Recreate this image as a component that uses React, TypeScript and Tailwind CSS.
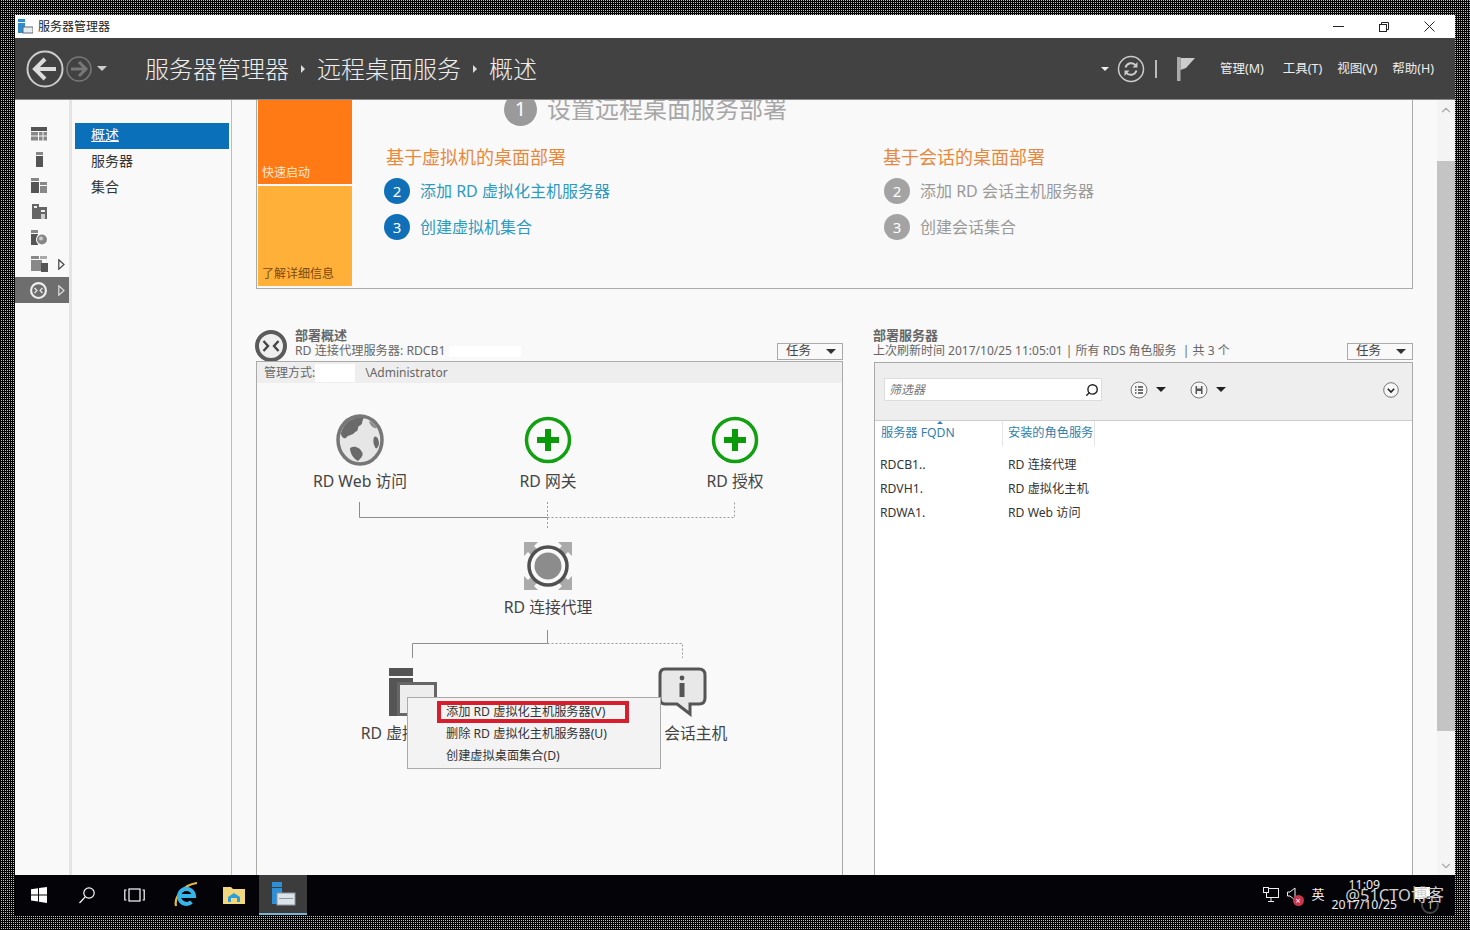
import React from 'react';
import { ChevronUp, ChevronDown, Search } from 'lucide-react';

const FONT = "font-['Noto_Sans','Noto_Sans_CJK_SC',sans-serif]";

const Triangle = ({ className }: { className: string }) => (
  <span className={`inline-block w-0 h-0 border-x-[5px] border-x-transparent border-t-[5px] ${className}`} />
);

const RailArrow = ({ color }: { color: string }) => (
  <svg className="absolute right-[4px]" width="7" height="11" viewBox="0 0 7 11" fill="none" stroke={color} strokeWidth="1.2">
    <path d="M0.8 0.8 L6 5.5 L0.8 10.2Z" />
  </svg>
);

// left rail glyphs, all drawn in the same 20x20 box
const RailIcon = ({ kind }: { kind: number }) => {
  const dark = '#555';
  const mid = '#888';
  return (
    <svg width="20" height="20" viewBox="0 0 20 20">
      {kind === 0 && (
        <>
          <rect x="2" y="3" width="16" height="4" fill={dark} />
          <rect x="2" y="8" width="7" height="3.5" fill={mid} />
          <rect x="10" y="8" width="3.5" height="3.5" fill={mid} />
          <rect x="14.5" y="8" width="3.5" height="3.5" fill={mid} />
          <rect x="2" y="12.5" width="7" height="4" fill={mid} />
          <rect x="10" y="12.5" width="3.5" height="4" fill={mid} />
          <rect x="14.5" y="12.5" width="3.5" height="4" fill={mid} />
        </>
      )}
      {kind === 1 && (
        <>
          <rect x="7" y="2" width="7" height="3" fill={mid} />
          <rect x="7" y="6" width="7" height="11" fill={dark} />
        </>
      )}
      {kind === 2 && (
        <>
          <rect x="2" y="2" width="8" height="3" fill={mid} />
          <rect x="2" y="6" width="8" height="11" fill={dark} />
          <rect x="11" y="6" width="7" height="3" fill={mid} />
          <rect x="11" y="10" width="7" height="7" fill={mid} />
        </>
      )}
      {kind === 3 && (
        <>
          <rect x="3" y="2" width="7" height="15" fill="#666" />
          <rect x="10" y="5" width="8" height="12" fill="#666" />
          <rect x="5" y="4" width="3" height="2" fill="#eee" />
          <rect x="12" y="8" width="4" height="2" fill="#eee" />
          <rect x="12" y="12" width="4" height="5" fill="#ccc" />
        </>
      )}
      {kind === 4 && (
        <>
          <rect x="2" y="2" width="7" height="3" fill={mid} />
          <rect x="2" y="6" width="7" height="11" fill={dark} />
          <circle cx="13" cy="11.5" r="6" fill="#fff" />
          <circle cx="13" cy="11.5" r="5" fill={mid} />
          <circle cx="12" cy="10.5" r="2" fill="#ccc" />
        </>
      )}
      {kind === 5 && (
        <>
          <rect x="2" y="2" width="8" height="3" fill={mid} />
          <rect x="2" y="6" width="11" height="11" fill={mid} />
          <rect x="11" y="2" width="7" height="3" fill="#aaa" />
          <rect x="12" y="9" width="7" height="9" fill={dark} />
        </>
      )}
    </svg>
  );
};

const RemoteGlyph = ({ size, ring, inner, mark }: { size: number; ring: string; inner: string; mark: string }) => (
  <svg width={size} height={size} viewBox="0 0 32 32">
    <circle cx="16" cy="16" r="14" fill={inner} stroke={ring} strokeWidth="4" />
    <path d="M8.5 11 L13 16 L8.5 21 M23.5 11 L19 16 L23.5 21" fill="none" stroke={mark} strokeWidth="2.4" />
  </svg>
);

const Globe = () => (
  <svg width="50" height="54" viewBox="0 0 50 54">
    <ellipse cx="25" cy="27" rx="22" ry="24" fill="#e6e6e6" stroke="#777" strokeWidth="3.5" />
    <path d="M6 20 C9 9 20 3 29 5 C26 8 29 11 24 13 C22 15 24 18 20 19 C18 23 13 21 11 25 C8 26 6 23 6 20Z" fill="#6a6a6a" />
    <path d="M15 35 C20 32 25 35 27 39 C29 42 26 45 23 48 C19 46 15 41 15 35Z" fill="#6a6a6a" />
    <path d="M39 24 C41 22 44 25 44 31 C43 35 41 37 40 34 C38 31 38 27 39 24Z" fill="#6a6a6a" />
    <path d="M34 8 C37 9 40 12 42 15 C38 16 35 12 34 8Z" fill="#8c8c8c" />
  </svg>
);

const GreenPlus = () => (
  <svg width="48" height="48" viewBox="0 0 48 48">
    <circle cx="24" cy="24" r="21.5" fill="#f9f9f9" stroke="#12a012" strokeWidth="3.5" />
    <path d="M21 13 H27 V21 H35 V27 H27 V35 H21 V27 H13 V21 H21Z" fill="#0a9a0a" />
  </svg>
);

const Broker = () => (
  <svg width="50" height="50" viewBox="0 0 50 50">
    <g fill="#aaa">
      <path d="M1 1 H15 L11 5 L17 11 L11 17 L5 11 L1 15Z" />
      <path d="M49 1 H35 L39 5 L33 11 L39 17 L45 11 L49 15Z" />
      <path d="M1 49 H15 L11 45 L17 39 L11 33 L5 39 L1 35Z" />
      <path d="M49 49 H35 L39 45 L33 39 L39 33 L45 39 L49 35Z" />
    </g>
    <circle cx="25" cy="25" r="19" fill="#f9f9f9" stroke="#505050" strokeWidth="3.5" />
    <circle cx="25" cy="25" r="13.5" fill="#8c8c8c" />
  </svg>
);

const VirtualHost = () => (
  <svg width="50" height="50" viewBox="0 0 50 50">
    <rect x="1" y="1" width="24" height="8" fill="#555" />
    <rect x="1" y="11" width="24" height="38" fill="#555" />
    <rect x="9" y="15" width="40" height="34" fill="#666" />
    <rect x="12" y="18" width="34" height="28" fill="#ededed" />
  </svg>
);

const SessionHost = () => (
  <svg width="50" height="50" viewBox="0 0 50 50">
    <path d="M7 2 H41 Q47 2 47 8 V31 Q47 37 41 37 H32 L32 47 L19 37 H7 Q2 37 2 31 V8 Q2 2 7 2Z" fill="#e8e8e8" stroke="#555" strokeWidth="3" />
    <circle cx="24" cy="11" r="2.4" fill="#555" />
    <rect x="21.5" y="16" width="5" height="14" fill="#555" />
  </svg>
);

const DiagramNode = ({ label, className, children }: { label: string; className: string; children: React.ReactNode }) => (
  <div className={`absolute flex flex-col items-center w-[140px] ${className}`}>
    <div className="h-[50px] flex items-center justify-center">{children}</div>
    <span className="mt-[5px] text-[15.8px] text-[#444] whitespace-nowrap">{label}</span>
  </div>
);

const StepRow = ({ n, label, active }: { n: number; label: string; active: boolean }) => (
  <div className="h-[36px] flex items-center gap-[10px]">
    <span className={`w-[26px] h-[26px] rounded-full flex items-center justify-center text-white text-[15px] ${active ? 'bg-[#0f70b7]' : 'bg-[#a3a3a3]'}`}>{n}</span>
    <span className={`text-[16px] ${active ? 'text-[#2f9ac0]' : 'text-[#9a9a9a]'}`}>{label}</span>
  </div>
);

const TasksButton = () => (
  <div className="w-[66px] h-[17px] border border-[#aaa] flex items-center justify-between pl-[8px] pr-[6px] text-[12.5px] text-[#444] bg-[#f9f9f9]">
    <span>任务</span>
    <Triangle className="border-t-[#333]" />
  </div>
);

const RAIL = [0, 1, 2, 3, 4, 5];
const SERVERS = [
  { name: 'RDCB1..', role: 'RD 连接代理' },
  { name: 'RDVH1.', role: 'RD 虚拟化主机' },
  { name: 'RDWA1.', role: 'RD Web 访问' },
];

const App: React.FC = () => {
  return (
    <div className={`w-[1470px] h-[930px] overflow-hidden p-[15px] bg-[repeating-conic-gradient(#9cc8d0_0_25%,#050505_0_100%)] bg-[length:2px_2px] ${FONT}`}>
      <div className="w-[1440px] h-[900px] flex flex-col overflow-hidden bg-[#f9f9f9]">

        {/* Title bar */}
        <div className="h-[23px] shrink-0 bg-white flex items-center">
          <svg className="ml-[3px]" width="15" height="15" viewBox="0 0 15 15">
            <rect x="0" y="0" width="7" height="3" fill="#2c8fd0" />
            <rect x="0" y="4" width="7" height="10" fill="#2c8fd0" />
            <rect x="5" y="8" width="10" height="6" fill="#e6eef3" stroke="#667" strokeWidth="1" />
          </svg>
          <span className="ml-[5px] text-[12px] text-[#222]">服务器管理器</span>
          <div className="ml-auto mr-[20px] flex items-center gap-[35px] text-[#222]">
            <span className="w-[11px] h-[1px] bg-[#222]" />
            <svg width="10" height="10" viewBox="0 0 10 10">
              <rect x="0.5" y="2.5" width="7" height="7" fill="none" stroke="#222" />
              <path d="M2.5 2.5 V0.5 H9.5 V7.5 H7.5" fill="none" stroke="#222" />
            </svg>
            <svg width="11" height="11" viewBox="0 0 11 11">
              <path d="M0.5 0.5 L10.5 10.5 M10.5 0.5 L0.5 10.5" stroke="#222" />
            </svg>
          </div>
        </div>

        {/* Header */}
        <div className="h-[62px] shrink-0 bg-[#424242] flex items-center border-b border-[#888]">
          <svg className="ml-[11px]" width="38" height="38" viewBox="0 0 38 38">
            <circle cx="19" cy="19" r="17.5" fill="none" stroke="#ccc" strokeWidth="2" />
            <path d="M19 9 L9 19 L19 29 M9.5 19 H30" fill="none" stroke="#ddd" strokeWidth="4" />
          </svg>
          <svg className="ml-[2px]" width="26" height="26" viewBox="0 0 26 26">
            <circle cx="13" cy="13" r="12" fill="none" stroke="#777" strokeWidth="1.6" />
            <path d="M13 6 L20 13 L13 20 M19 13 H5" fill="none" stroke="#777" strokeWidth="3" />
          </svg>
          <Triangle className="ml-[5px] border-t-[#ccc]" />
          <div className="ml-[38px] flex items-center text-[24px] text-[#eee] font-light whitespace-nowrap">
            <span>服务器管理器</span>
            <span className="mx-[12px] w-0 h-0 border-y-[4px] border-y-transparent border-l-[4px] border-l-[#ddd]" />
            <span>远程桌面服务</span>
            <span className="mx-[12px] w-0 h-0 border-y-[4px] border-y-transparent border-l-[4px] border-l-[#ddd]" />
            <span>概述</span>
          </div>
          <div className="ml-auto flex items-center text-[12.5px] text-[#eee] whitespace-nowrap">
            <span className="w-0 h-0 border-x-[4px] border-x-transparent border-t-[4px] border-t-[#eee]" />
            <svg className="ml-[8px]" width="28" height="28" viewBox="0 0 28 28">
              <circle cx="14" cy="14" r="12.5" fill="none" stroke="#ccc" strokeWidth="1.5" />
              <path d="M8.5 12.5 A6 6 0 0 1 19 10.5 M19.5 15.5 A6 6 0 0 1 9 17.5" fill="none" stroke="#ccc" strokeWidth="2" />
              <path d="M20.5 7 V12.5 H15.5Z M7.5 21 V15.5 H12.5Z" fill="#ccc" />
            </svg>
            <span className="ml-[10px] w-[2px] h-[18px] bg-[#bbb]" />
            <svg className="ml-[20px]" width="18" height="24" viewBox="0 0 18 24">
              <rect x="0" y="0" width="3.5" height="24" fill="#aaa" />
              <path d="M3.5 1 H18 L9 11 L3.5 13Z" fill="#ccc" />
            </svg>
            <span className="ml-[25px] pt-[2px]">管理(M)</span>
            <span className="ml-[19px] pt-[2px]">工具(T)</span>
            <span className="ml-[15px] pt-[2px]">视图(V)</span>
            <span className="ml-[15px] mr-[21px] pt-[2px]">帮助(H)</span>
          </div>
        </div>

        {/* Body */}
        <div className="flex-1 min-h-0 flex overflow-hidden">
          {/* Icon rail */}
          <div className="w-[54px] shrink-0 pt-[21px] flex flex-col">
            {RAIL.map(k => (
              <div key={k} className="h-[26px] flex items-center pl-[14px] relative">
                <RailIcon kind={k} />
                {k === 5 && <RailArrow color="#444" />}
              </div>
            ))}
            <div className="h-[26px] flex items-center pl-[15px] bg-[#6e6e6e] relative">
              <RemoteGlyph size={17} ring="#eee" inner="#6e6e6e" mark="#eee" />
              <RailArrow color="#ddd" />
            </div>
          </div>
          <div className="w-[3px] shrink-0 bg-[#e4e4e4]" />

          {/* Nav column */}
          <div className="w-[160px] shrink-0 pt-[23px] px-[3px] border-r border-[#bdbdbd] text-[14px] leading-[20px] text-[#333]">
            <div className="h-[26px] w-[154px] bg-[#0a70ba] text-white flex items-center pl-[16px] pb-[2px]"><span className="underline">概述</span></div>
            <div className="h-[26px] flex items-center pl-[16px] pb-[3px]">服务器</div>
            <div className="h-[26px] flex items-center pl-[16px] pb-[3px]">集合</div>
          </div>

          {/* Main scrolling area */}
          <div className="flex-1 min-w-0 px-[24px] overflow-hidden">
            {/* Quick start panel, scrolled so that its top is cut off */}
            <div className="h-[189px] w-[1157px] border-x border-b border-[#aaa] flex">
              <div className="ml-[1px] w-[94px] mb-[2px] flex flex-col gap-[2px] text-[12px] text-[#ffe9d0]">
                <div className="h-[84px] bg-[#ff7a14] flex items-end pl-[4px] pb-[2px]">快速启动</div>
                <div className="flex-1 bg-[#ffb038] flex items-end pl-[4px] pb-[3px] text-[#7a4a10]">了解详细信息</div>
              </div>
              <div className="flex-1 relative overflow-hidden">
                <div className="absolute left-[152px] top-[-9px] flex items-center gap-[10px] text-[#a6a6a6] text-[24px] whitespace-nowrap">
                  <span className="w-[33px] h-[33px] rounded-full bg-[#9a9a9a] text-white text-[20px] flex items-center justify-center">1</span>
                  <span>设置远程桌面服务部署</span>
                </div>
                <div className="pt-[44px] pl-[32px] grid grid-cols-[497px_1fr]">
                  <div>
                    <div className="pl-[2px] text-[18px] leading-[26px] text-[#e8883c] mb-[3px]">基于虚拟机的桌面部署</div>
                    <StepRow n={2} label="添加 RD 虚拟化主机服务器" active />
                    <StepRow n={3} label="创建虚拟机集合" active />
                  </div>
                  <div>
                    <div className="pl-[2px] text-[18px] leading-[26px] text-[#e8883c] mb-[3px]">基于会话的桌面部署</div>
                    <div className="pl-[3px]">
                      <StepRow n={2} label="添加 RD 会话主机服务器" active={false} />
                      <StepRow n={3} label="创建会话集合" active={false} />
                    </div>
                  </div>
                </div>
              </div>
            </div>

            <div className="mt-[37px] flex items-start w-[1157px]">
              {/* Deployment overview */}
              <div className="w-[587px] shrink-0">
                <div className="h-[36px] flex items-end relative">
                  <div className="-ml-[1px]"><RemoteGlyph size={32} ring="#5a5a5a" inner="#eeeeee" mark="#444" /></div>
                  <div className="ml-[8px] leading-[16px] pb-[3px]">
                    <div className="text-[13px] font-semibold text-[#666]">部署概述</div>
                    <div className="text-[12.2px] text-[#666] flex items-center">RD 连接代理服务器: RDCB1<span className="ml-[4px] w-[72px] h-[11px] bg-white" /></div>
                  </div>
                  <div className="ml-auto mb-[2px]"><TasksButton /></div>
                </div>
                <div className="relative h-[560px] border border-[#aaa] mt-[-1px]">
                  <div className="h-[21px] bg-[#eeeeee] flex items-center pl-[7px] text-[12px] text-[#666]">
                    管理方式:<span className="w-[40px] h-[18px] bg-white" /><span className="ml-[10px]">\Administrator</span>
                  </div>

                  <svg className="absolute left-0 top-0" width="585" height="330" fill="none">
                    <path d="M102.5 140 V155.5 H290.5" stroke="#8c8c8c" />
                    <path d="M290.5 140 V168 M290.5 155.5 H477.5 V140" stroke="#999" strokeDasharray="2 2" />
                    <path d="M290.5 268 V281.5 H155.5 V296" stroke="#8c8c8c" />
                    <path d="M290.5 281.5 H425.5 V296" stroke="#999" strokeDasharray="2 2" />
                  </svg>

                  <DiagramNode label="RD Web 访问" className="left-[33px] top-[53px]"><Globe /></DiagramNode>
                  <DiagramNode label="RD 网关" className="left-[221px] top-[53px]"><GreenPlus /></DiagramNode>
                  <DiagramNode label="RD 授权" className="left-[408px] top-[53px]"><GreenPlus /></DiagramNode>
                  <DiagramNode label="RD 连接代理" className="left-[221px] top-[179px]"><Broker /></DiagramNode>
                  <DiagramNode label="RD 虚拟化主机" className="left-[86px] top-[305px]"><VirtualHost /></DiagramNode>
                  <DiagramNode label="RD 会话主机" className="left-[356px] top-[305px]"><SessionHost /></DiagramNode>

                  {/* Context menu */}
                  <div className="absolute left-[150px] top-[335px] w-[254px] h-[72px] bg-[#f3f3f3] border border-[#aaa] text-[12.2px] text-[#333] pl-[30px] pt-[3px]">
                    <div className="h-[22px] w-[192px] -ml-[1px] pl-[5px] flex items-center border-[4px] border-[#d81e2c] whitespace-nowrap">添加 RD 虚拟化主机服务器(V)</div>
                    <div className="h-[22px] pl-[8px] flex items-center whitespace-nowrap">删除 RD 虚拟化主机服务器(U)</div>
                    <div className="h-[22px] pl-[8px] flex items-center whitespace-nowrap">创建虚拟桌面集合(D)</div>
                  </div>
                </div>
              </div>

              {/* Deployment servers */}
              <div className="ml-[31px] flex-1 min-w-0">
                <div className="h-[36px] flex items-end">
                  <div className="-ml-[1px] leading-[16px] pb-[3px]">
                    <div className="text-[13px] font-semibold text-[#666]">部署服务器</div>
                    <div className="text-[12px] text-[#666]">上次刷新时间 2017/10/25 11:05:01 | 所有 RDS 角色服务&nbsp; | 共 3 个</div>
                  </div>
                  <div className="ml-auto mb-[2px]"><TasksButton /></div>
                </div>
                <div className="h-[560px] border border-[#aaa] bg-white">
                  <div className="h-[58px] bg-[#eeeeee] border-b border-[#ccc] flex items-center pl-[9px] pb-[4px]">
                    <div className="w-[218px] h-[23px] bg-white border border-[#ddd] flex items-center justify-between pl-[4px] pr-[2px] text-[12px] text-[#777] italic">
                      <span>筛选器</span>
                      <Search size={14} strokeWidth={2.4} className="text-[#222] -scale-x-100" />
                    </div>
                    <svg className="ml-[28px]" width="18" height="18" viewBox="0 0 18 18">
                      <circle cx="9" cy="9" r="8" fill="#f7f7f7" stroke="#777" />
                      <path d="M5 6 H6.5 M8 6 H13 M5 9 H6.5 M8 9 H13 M5 12 H6.5 M8 12 H13" stroke="#444" strokeWidth="1.3" />
                    </svg>
                    <Triangle className="ml-[8px] border-t-[#222]" />
                    <svg className="ml-[24px]" width="18" height="18" viewBox="0 0 18 18">
                      <circle cx="9" cy="9" r="8" fill="#f7f7f7" stroke="#777" />
                      <path d="M5.5 5 H12.5 V13 H5.5Z" fill="#555" />
                      <rect x="7" y="5" width="4" height="2.5" fill="#eee" />
                      <rect x="7" y="10" width="4" height="3" fill="#eee" />
                    </svg>
                    <Triangle className="ml-[8px] border-t-[#222]" />
                    <svg className="ml-auto mr-[13px]" width="16" height="16" viewBox="0 0 16 16">
                      <circle cx="8" cy="8" r="7.3" fill="#f7f7f7" stroke="#777" />
                      <path d="M4.8 6.8 L8 10 L11.2 6.8" fill="none" stroke="#222" strokeWidth="1.6" />
                    </svg>
                  </div>
                  <div className="h-[25px] flex text-[12.2px] text-[#2f7fb0] relative">
                    <span className="absolute left-[62px] top-0 w-0 h-0 border-x-[3px] border-x-transparent border-b-[3px] border-b-[#2f7fb0]" />
                    <div className="w-[128px] pl-[6px] flex items-center border-r border-[#e5e5e5]">服务器 FQDN</div>
                    <div className="w-[92px] pl-[5px] flex items-center border-r border-[#e5e5e5] whitespace-nowrap">安装的角色服务</div>
                  </div>
                  <div className="pt-[7px]">
                    {SERVERS.map(s => (
                      <div key={s.name} className="h-[24px] flex items-center text-[12.2px] text-[#333]">
                        <span className="w-[128px] pl-[5px]">{s.name}</span>
                        <span className="pl-[5px]">{s.role}</span>
                      </div>
                    ))}
                  </div>
                </div>
              </div>
            </div>
          </div>

          {/* Scrollbar */}
          <div className="w-[18px] shrink-0 bg-[#f4f4f4] flex flex-col items-center justify-between">
            <div className="w-full flex-1 flex flex-col">
              <div className="h-[61px] flex justify-center pt-[3px]"><ChevronUp size={14} className="text-[#aaa]" /></div>
              <div className="h-[570px] w-full bg-[#c4c4c4]" />
            </div>
            <div className="h-[18px] flex items-center"><ChevronDown size={14} className="text-[#aaa]" /></div>
          </div>
        </div>

        {/* Taskbar */}
        <div className="h-[40px] shrink-0 bg-[#040408] flex items-center relative">
          <svg className="ml-[16px]" width="16" height="16" viewBox="0 0 16 16" fill="#fff">
            <path d="M0 2.3 L7 1.3 V7.4 H0Z M8 1.1 L16 0 V7.4 H8Z M0 8.4 H7 V14.6 L0 13.6Z M8 8.4 H16 V16 L8 14.8Z" />
          </svg>
          <svg className="ml-[31px]" width="18" height="18" viewBox="0 0 18 18" fill="none" stroke="#fff" strokeWidth="1.2">
            <circle cx="11" cy="7" r="5.2" />
            <path d="M7.2 10.8 L1.5 17" />
          </svg>
          <svg className="ml-[28px]" width="21" height="14" viewBox="0 0 21 14" fill="none" stroke="#fff" strokeWidth="1.2">
            <rect x="5" y="1" width="11" height="12" />
            <path d="M2.5 2 H0.8 V12 H2.5 M18.5 2 H20.2 V12 H18.5" />
          </svg>
          <svg className="ml-[29px]" width="24" height="26" viewBox="0 0 24 26" fill="none">
            <path d="M2 24 C0 15 9 3 23 1" stroke="#e7b93a" strokeWidth="2.2" />
            <path d="M6 14 H20 A7.5 7.5 0 1 0 17.5 20" stroke="#35b5ea" strokeWidth="4" />
          </svg>
          <svg className="ml-[25px]" width="22" height="18" viewBox="0 0 22 18">
            <path d="M0 1 H8 L10 3 H22 V18 H0Z" fill="#f2d77e" />
            <path d="M5 16 V11 L11 7 L17 11 V16 H14 V12 H8 V16Z" fill="#2d9fd8" />
          </svg>
          <div className="ml-[14px] w-[48px] h-[40px] bg-[#3c3c3c] border-b-[2px] border-[#79b4d6] flex items-center justify-center">
            <svg width="25" height="25" viewBox="0 0 25 25">
              <rect x="1" y="0" width="10" height="5" fill="#2d8fd6" />
              <rect x="1" y="6" width="10" height="16" fill="#2d8fd6" />
              <rect x="6" y="11" width="18" height="12" fill="#dbe3e8" stroke="#8b98a2" />
              <rect x="8" y="16" width="14" height="1" fill="#8b98a2" />
            </svg>
          </div>

          {/* Tray */}
          <div className="ml-auto mr-[58px] flex items-center text-[#eee] text-[13px]">
            <svg width="16" height="16" viewBox="0 0 16 16" fill="none" stroke="#eee">
              <rect x="3.5" y="1.5" width="12" height="9" />
              <path d="M8 11 V14 M5 14.5 H11" />
              <rect x="0.5" y="0.5" width="5" height="5" fill="#040408" />
            </svg>
            <div className="ml-[8px] relative w-[16px] h-[16px]">
              <svg width="10" height="14" viewBox="0 0 10 14" fill="none" stroke="#eee"><path d="M0.5 5 H3 L8 1 V13 L3 9 H0.5Z" /></svg>
              <span className="absolute right-[-1px] bottom-[-3px] w-[11px] h-[11px] rounded-full bg-[#c8364a] text-white text-[9px] leading-[11px] text-center">×</span>
            </div>
            <span className="ml-[9px]">英</span>
            <div className="ml-[7px] text-[12.3px] leading-[20px] text-center">
              <div>11:09</div>
              <div>2017/10/25</div>
            </div>
          </div>
          <span className="absolute left-[1400px] top-[12px] w-[15px] h-[12px] bg-white" />
          <span className="absolute left-[1406px] top-[21px] w-[18px] h-[18px] rounded-full border-2 border-[#444] text-[#ddd] text-[10px] leading-[14px] text-center">1</span>
          <span className="absolute right-[11px] top-[8px] text-[16.5px] text-[#cfcfcf] whitespace-nowrap">@51CTO博客</span>
        </div>
      </div>
    </div>
  );
};

export default App;
